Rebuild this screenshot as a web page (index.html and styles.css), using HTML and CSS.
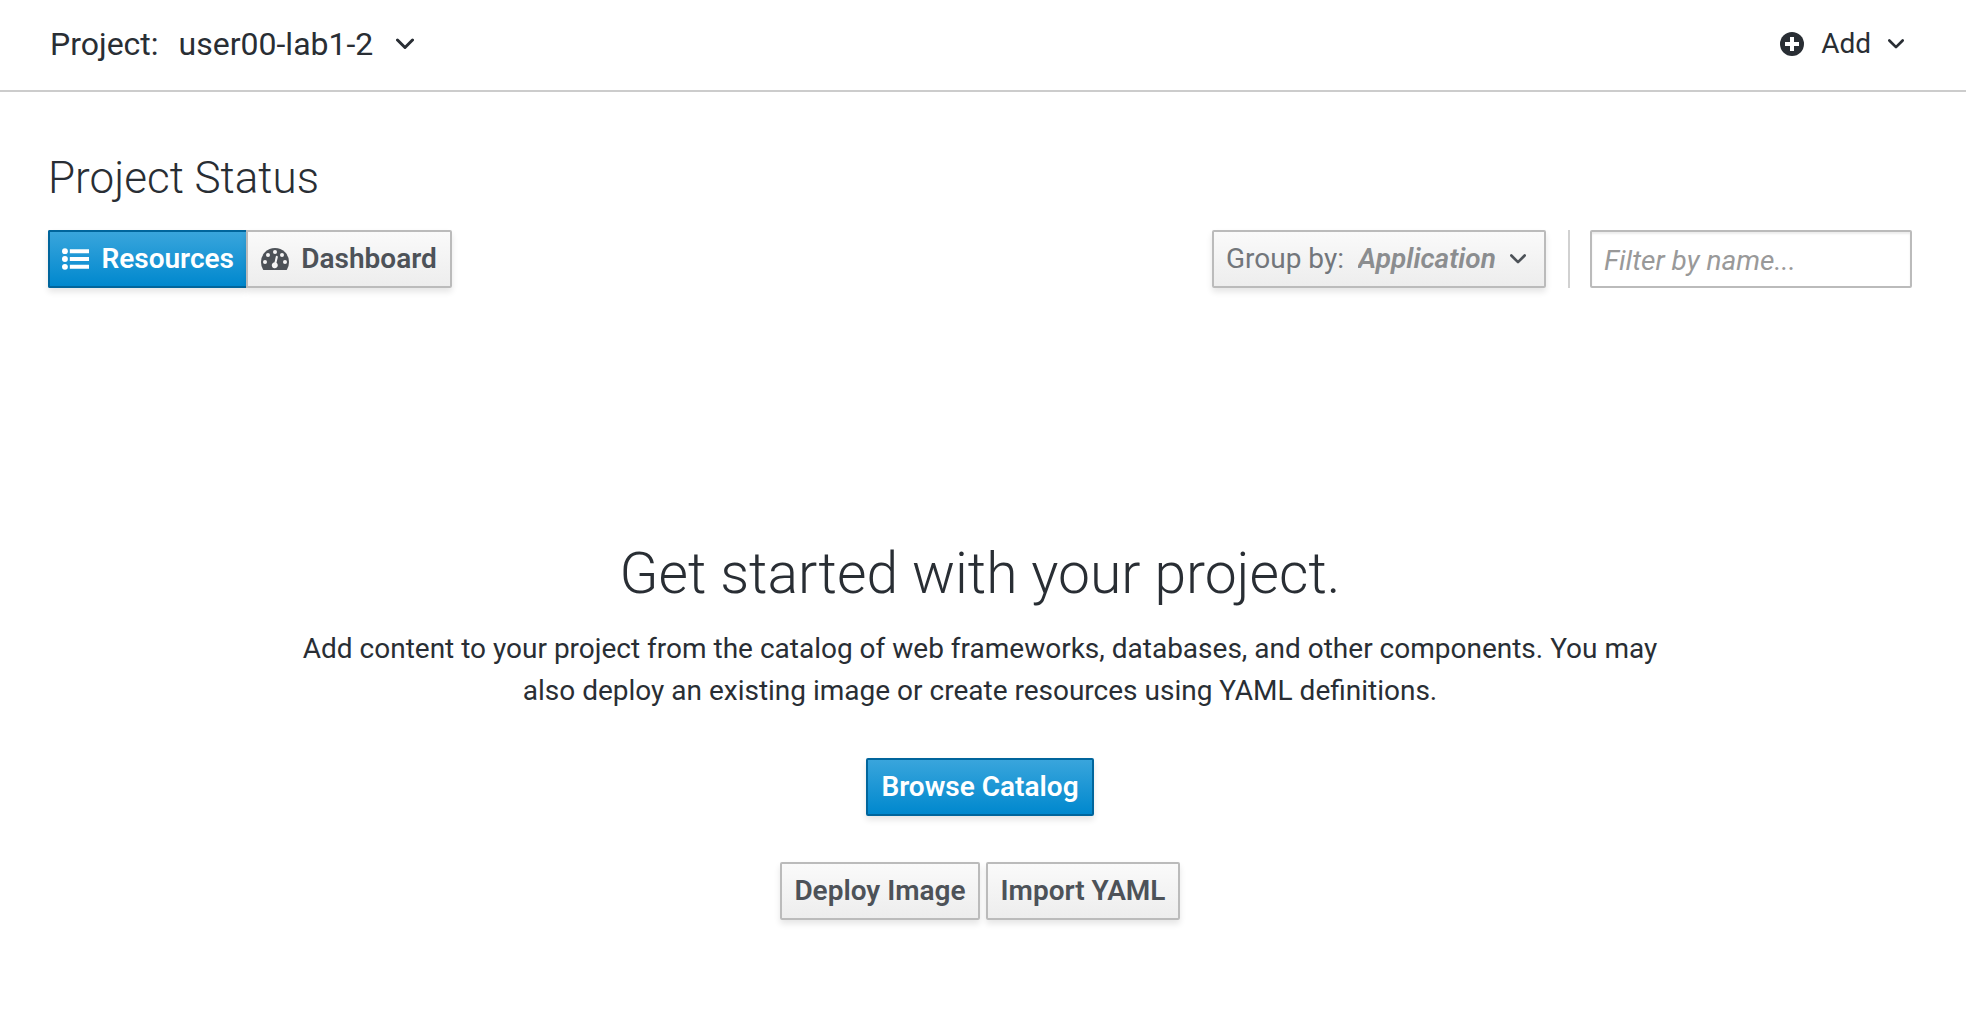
FILE: index.html
```
<!DOCTYPE html>
<html lang="en">
<head>
<meta charset="utf-8">
<meta name="viewport" content="width=device-width, initial-scale=1">
<title>Project Status</title>
<link rel="stylesheet" href="styles.css">
</head>
<body>
<header class="topbar">
  <div class="project-picker">
    <label for="project">Project:</label>
    <div class="dropdown">
      <select id="project" class="project-select"><option>user00-lab1-2</option></select>
      <svg class="chevron chevron-lg" viewBox="0 0 18 12" aria-hidden="true"><path d="M1.500 2 9 9.500 16.500 2"/></svg>
    </div>
  </div>
  <button class="add-button" type="button">
    <svg class="plus-icon" viewBox="0 0 24 24" aria-hidden="true"><circle cx="12" cy="12" r="12" fill="currentColor"/><path d="M12 5v14M5 12h14" stroke="#fff" stroke-width="4"/></svg>
    <span>Add</span>
    <svg class="chevron" viewBox="0 0 18 12" aria-hidden="true"><path d="M1.500 2 9 9.500 16.500 2"/></svg>
  </button>
</header>
<main class="content">
  <h1 class="page-title">Project Status</h1>
  <div class="toolbar">
    <div class="view-switch">
      <button class="btn btn-primary view-resources" type="button">
        <svg class="list-icon" viewBox="0 0 28 22" aria-hidden="true"><circle cx="3" cy="3" r="3"/><circle cx="3" cy="11" r="3"/><circle cx="3" cy="19" r="3"/><path d="M8 1h20v4H8zM8 9h20v4H8zM8 17h20v4H8z"/></svg>
        Resources
      </button>
      <button class="btn view-dashboard" type="button">
        <svg class="gauge-icon" viewBox="0 0 28 22" aria-hidden="true"><path d="M14 0A14 14 0 0 0 0 14q0 4.200 2 7.400.400.600 1 .600h22q.600 0 1-.600 2-3.200 2-7.400A14 14 0 0 0 14 0z"/><g fill="#f5f5f5"><circle cx="4" cy="14" r="2"/><circle cx="7" cy="7" r="2"/><circle cx="14" cy="4" r="2"/><circle cx="21" cy="7" r="2"/><circle cx="24" cy="14" r="2"/><path d="M15.600 7.800q1.300.100 1.200 1.400l-1.300 5.600a3 3 0 1 1-2-.500l1.300-5.700q.200-.700.800-.800z"/></g></svg>
        Dashboard
      </button>
    </div>
    <div class="filters">
      <div class="btn group-by">
        <label for="group">Group by:</label>
        <div class="dropdown">
          <select id="group" class="group-select"><option>Application</option></select>
          <svg class="chevron" viewBox="0 0 18 12" aria-hidden="true"><path d="M1.500 2 9 9.500 16.500 2"/></svg>
        </div>
      </div>
      <div class="divider"></div>
      <input class="filter-input" type="text" placeholder="Filter by name..." aria-label="Filter by name">
    </div>
  </div>
  <section class="empty-state">
    <h2 class="empty-title">Get started with your project.</h2>
    <p class="empty-text">Add content to your project from the catalog of web frameworks, databases, and other components. You may also deploy an existing image or create resources using YAML definitions.</p>
    <button class="btn btn-primary browse" type="button">Browse Catalog</button>
    <div class="actions">
      <button class="btn deploy" type="button">Deploy Image</button>
      <button class="btn import" type="button">Import YAML</button>
    </div>
  </section>
</main>
</body>
</html>
```
FILE: styles.css
```
* { box-sizing: border-box; }

body {
  margin: 0;
  background: #fff;
  color: #292e34;
  font-family: Roboto, "Liberation Sans", sans-serif;
  font-size: 28px;
  line-height: 42px;
}

button, select, input { font: inherit; color: inherit; }

button { cursor: pointer; white-space: nowrap; }

.topbar {
  display: flex;
  justify-content: space-between;
  align-items: center;
  height: 92px;
  padding: 0 62px 2px 50px;
  border-bottom: 2px solid #ccc;
}

.project-picker {
  display: flex;
  align-items: center;
  gap: 20px;
  font-size: 32px;
}

.dropdown {
  display: grid;
  align-items: center;
}

.dropdown > * { grid-area: 1 / 1; }

.dropdown select {
  appearance: none;
  border: 0;
  padding: 0;
  background: none;
}

.dropdown .chevron {
  justify-self: end;
  pointer-events: none;
}

.dropdown .project-select { padding-right: 40px; }

.chevron {
  width: 16px;
  height: 12px;
  fill: none;
  stroke: currentColor;
  stroke-width: 3;
  stroke-linecap: round;
  stroke-linejoin: round;
}

.chevron-lg { width: 18px; }

.add-button {
  display: flex;
  align-items: center;
  gap: 17px;
  padding: 0;
  border: 0;
  background: none;
}

.plus-icon {
  width: 24px;
  height: 24px;
}

.content { padding: 56px 54px 0 48px; }

.page-title {
  margin: 0;
  font-size: 44px;
  font-weight: 300;
  line-height: 60px;
}

.toolbar {
  display: flex;
  justify-content: space-between;
  margin-top: 22px;
}

.view-switch, .filters { display: flex; }

.btn {
  display: flex;
  align-items: center;
  justify-content: center;
  height: 58px;
  padding: 0 12px;
  border: 2px solid #bbb;
  border-radius: 2px;
  background: linear-gradient(#fafafa, #ededed);
  box-shadow: 0 4px 6px rgba(3, 3, 3, 0.1);
  color: #4d5258;
  font-weight: 600;
}

.btn svg { fill: currentColor; }

.btn .chevron { fill: none; }

.btn-primary {
  border-color: #00659c;
  background: linear-gradient(#39a5dc, #0088ce);
  color: #fff;
}

.list-icon, .gauge-icon {
  width: 28px;
  height: 22px;
  margin-right: 12px;
}

.view-resources {
  width: 198px;
  border-right: 0;
  border-radius: 2px 0 0 2px;
}

.view-dashboard {
  width: 206px;
  border-radius: 0 2px 2px 0;
}

.group-by {
  justify-content: space-between;
  width: 334px;
  padding-right: 18px;
  font-weight: 400;
}

.group-by label { color: #72767b; }

.dropdown .group-select {
  padding-right: 30px;
  color: #8b8d8f;
  font-style: italic;
  font-weight: 600;
}

.divider {
  width: 2px;
  margin: 0 20px 0 22px;
  background: #d1d1d1;
}

.filter-input {
  width: 322px;
  height: 58px;
  padding: 2px 12px 0;
  border: 2px solid #bbb;
  border-radius: 2px;
  background: #fff;
  box-shadow: inset 0 2px 2px rgba(3, 3, 3, 0.08);
}

.filter-input::placeholder {
  color: #999;
  font-style: italic;
  opacity: 1;
}

.empty-state {
  display: flex;
  flex-direction: column;
  align-items: center;
  max-width: 1360px;
  margin: 250px auto 0;
  text-align: center;
}

.empty-title {
  margin: 0;
  font-size: 57px;
  font-weight: 300;
  line-height: 72px;
}

.empty-text { margin: 18px 0 46px; }

.browse { width: 228px; }

.actions {
  display: flex;
  gap: 6px;
  margin: 46px 0;
}

.deploy { width: 200px; }

.import { width: 194px; }
```
